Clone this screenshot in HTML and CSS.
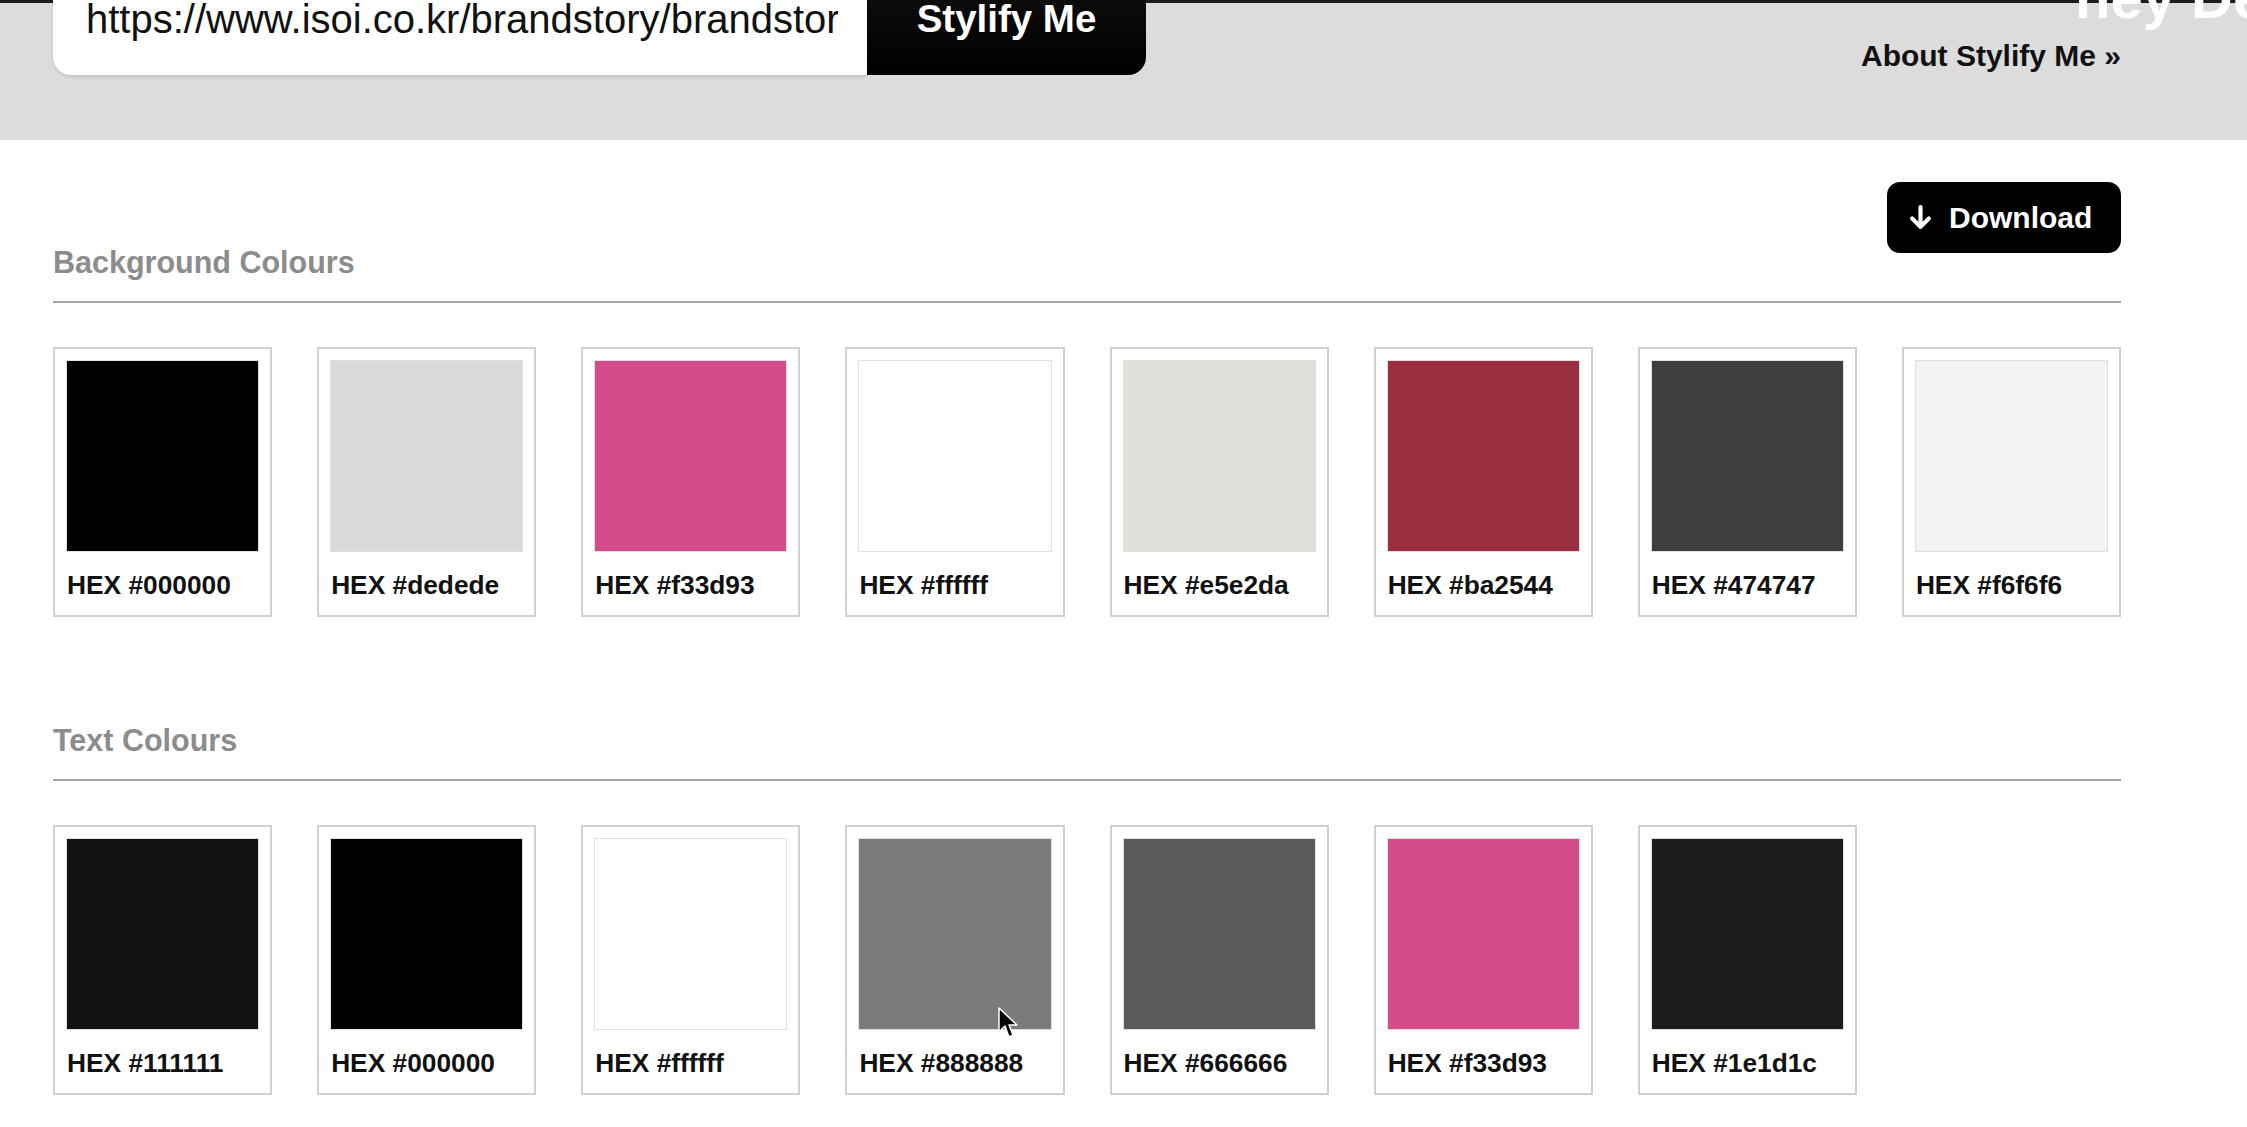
FILE: index.html
```html
<!DOCTYPE html>
<html lang="en">
<head>
    <meta charset="UTF-8">
    <meta name="viewport" content="width=device-width, initial-scale=1.0">
    <title>Stylify Me</title>
    <link rel="stylesheet" href="styles.css">
</head>
<body>

    <!-- Top bar with the url form -->
    <header class="topbar">
        <form class="stylify-form">
            <input type="text" class="url-input" value="https://www.isoi.co.kr/brandstory/brandstory.php">
            <button type="submit" class="stylify-btn">Stylify Me</button>
        </form>
        <nav class="topbar-nav">
            <a href="#" class="about-link">About Stylify Me &raquo;</a>
        </nav>
        <span class="hey-text">hey Designers</span>
    </header>

    <main class="results">

        <!-- Background colours -->
        <section class="palette">
            <div class="palette-head">
                <h2>Background Colours</h2>
                <button class="download-btn">
                    <svg class="download-icon" viewBox="0 0 24 24" width="25" height="25">
                        <path d="M12 2 V21 M4 13 L12 21 L20 13" fill="none" stroke="#fff" stroke-width="4" stroke-linecap="round" stroke-linejoin="round"/>
                    </svg>
                    Download
                </button>
            </div>
            <div class="swatches">
                <div class="card"><div class="swatch" style="background:#000000"></div><p>HEX #000000</p></div>
                <div class="card"><div class="swatch" style="background:#d9d9d9"></div><p>HEX #dedede</p></div>
                <div class="card"><div class="swatch" style="background:#d54a88"></div><p>HEX #f33d93</p></div>
                <div class="card"><div class="swatch" style="background:#ffffff"></div><p>HEX #ffffff</p></div>
                <div class="card"><div class="swatch" style="background:#e1dfda"></div><p>HEX #e5e2da</p></div>
                <div class="card"><div class="swatch" style="background:#9c2f3f"></div><p>HEX #ba2544</p></div>
                <div class="card"><div class="swatch" style="background:#3e3e3e"></div><p>HEX #474747</p></div>
                <div class="card"><div class="swatch" style="background:#f3f3f3"></div><p>HEX #f6f6f6</p></div>
            </div>
        </section>

        <!-- Text colours -->
        <section class="palette">
            <div class="palette-head">
                <h2>Text Colours</h2>
            </div>
            <div class="swatches">
                <div class="card"><div class="swatch" style="background:#121212"></div><p>HEX #111111</p></div>
                <div class="card"><div class="swatch" style="background:#000000"></div><p>HEX #000000</p></div>
                <div class="card"><div class="swatch" style="background:#ffffff"></div><p>HEX #ffffff</p></div>
                <div class="card"><div class="swatch" style="background:#7b7b7b"></div><p>HEX #888888</p></div>
                <div class="card"><div class="swatch" style="background:#5b5b5b"></div><p>HEX #666666</p></div>
                <div class="card"><div class="swatch" style="background:#d54a88"></div><p>HEX #f33d93</p></div>
                <div class="card"><div class="swatch" style="background:#1b1b1b"></div><p>HEX #1e1d1c</p></div>
            </div>
        </section>

    </main>

    <!-- Mouse pointer from the capture -->
    <svg class="cursor" viewBox="0 0 20 32" width="20" height="32">
        <path d="M1 1 L1 25 L7 19 L11 30 L15 28 L11 18 L19 18 Z" fill="#000" stroke="#fff" stroke-width="1.5" stroke-linejoin="round"/>
    </svg>

</body>
</html>
```

FILE: styles.css
```css
/* Page */
html, body {
    overflow-x: hidden;
}

body {
    margin: 0;
    font-family: 'Liberation Sans', Arial, sans-serif;
    background: #ffffff;
    color: #111;
    position: relative;
    min-height: 1127px;
}

/* Top bar */
.topbar {
    position: relative;
    box-sizing: border-box;
    height: 140px;
    background: #dcdcdc;
    border-top: 3px solid #1c1c1c;
    display: flex;
    justify-content: space-between;
    align-items: flex-start;
    padding: 0 126px 0 53px;
}

.stylify-form {
    display: flex;
    margin-top: -40px;
    height: 112px;
}

.url-input {
    box-sizing: border-box;
    width: 814px;
    height: 112px;
    border: none;
    border-radius: 0 0 0 18px;
    padding: 0 29px 0 33px;
    font-family: 'Liberation Sans', Arial, sans-serif;
    font-size: 40px;
    color: #111;
    background: #fff;
    box-shadow: 0 2px 3px rgba(0, 0, 0, 0.12);
    outline: none;
}

.stylify-btn {
    width: 279px;
    height: 112px;
    border: none;
    border-radius: 0 0 18px 0;
    background: linear-gradient(to bottom, #111, #000);
    color: #fff;
    font-family: 'Liberation Sans', Arial, sans-serif;
    font-weight: bold;
    font-size: 38.5px;
    cursor: pointer;
}

.topbar-nav {
    margin-top: 35px;
}

.about-link {
    display: block;
    color: #111;
    text-decoration: none;
    font-weight: bold;
    font-size: 30px;
    line-height: 36px;
}

.hey-text {
    position: absolute;
    left: 2075px;
    top: -34px;
    font-weight: bold;
    font-size: 58px;
    line-height: 58px;
    color: #fff;
    white-space: nowrap;
}

/* Results */
.results {
    width: 2068px;
    margin: 42px 0 0 53px;
}

.palette + .palette {
    margin-top: 105px;
}

.palette-head {
    display: flex;
    justify-content: space-between;
    align-items: flex-end;
    border-bottom: 2px solid #a3a3a3;
}

.palette-head h2 {
    margin: 0 0 21px;
    font-size: 30.5px;
    line-height: 36px;
    color: #8c8c8c;
}

.download-btn {
    display: flex;
    align-items: center;
    gap: 16px;
    box-sizing: border-box;
    width: 234px;
    height: 71px;
    margin-bottom: 48px;
    padding: 0 0 0 21px;
    border: none;
    border-radius: 13px;
    background: #000;
    color: #fff;
    font-family: 'Liberation Sans', Arial, sans-serif;
    font-weight: bold;
    font-size: 30px;
    cursor: pointer;
}

.download-icon {
    flex-shrink: 0;
}

/* Swatch grid */
.swatches {
    display: grid;
    grid-template-columns: repeat(8, 1fr);
    column-gap: 45px;
    margin-top: 44px;
}

.card {
    border: 2px solid #d0d0d0;
    padding: 12px 12px 14px;
    background: #fff;
}

.swatch {
    height: 190px;
    box-shadow: 0 0 0 1px rgba(0, 0, 0, 0.12);
}

.card p {
    margin: 18px 0 0;
    font-size: 26.3px;
    line-height: 32px;
    font-weight: bold;
    color: #111;
    white-space: nowrap;
}

/* Mouse pointer overlay */
.cursor {
    position: absolute;
    left: 998px;
    top: 1007px;
}
```
